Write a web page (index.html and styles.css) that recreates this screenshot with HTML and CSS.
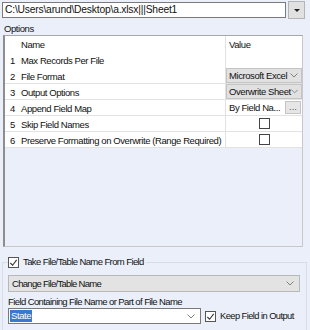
FILE: index.html
```html
<!DOCTYPE html>
<html>
<head>
    <meta charset="UTF-8">
    <meta name="viewport" content="width=device-width, initial-scale=1.0">
    <title>Output Options</title>
    <link rel="stylesheet" href="styles.css">
</head>
<body>
    <div class="pathRow">
        <div class="pathBox">C:\Users\arund\Desktop\a.xlsx|||Sheet1</div>
        <div class="pathBtn"><span class="tri"></span></div>
    </div>

    <div class="optLabel">Options</div>

    <div class="grid">
        <div class="row head">
            <div class="num"></div>
            <div class="name">Name</div>
            <div class="val">Value</div>
        </div>
        <div class="row first">
            <div class="num">1</div>
            <div class="name">Max Records Per File</div>
            <div class="val"></div>
        </div>
        <div class="row">
            <div class="num">2</div>
            <div class="name">File Format</div>
            <div class="val"><div class="combo">Microsoft Excel<svg width="8" height="5" viewBox="0 0 8 5"><path d="M0.5 0.5 L4 4 L7.5 0.5" fill="none" stroke="#808080"/></svg></div></div>
        </div>
        <div class="row">
            <div class="num">3</div>
            <div class="name">Output Options</div>
            <div class="val"><div class="combo">Overwrite Sheet<svg width="8" height="5" viewBox="0 0 8 5"><path d="M0.5 0.5 L4 4 L7.5 0.5" fill="none" stroke="#808080"/></svg></div></div>
        </div>
        <div class="row">
            <div class="num">4</div>
            <div class="name">Append Field Map</div>
            <div class="val"><div class="mapCell"><span>By Field Na...</span><span class="dots">...</span></div></div>
        </div>
        <div class="row">
            <div class="num">5</div>
            <div class="name">Skip Field Names</div>
            <div class="val center"><span class="box"></span></div>
        </div>
        <div class="row">
            <div class="num">6</div>
            <div class="name">Preserve Formatting on Overwrite (Range Required)</div>
            <div class="val center"><span class="box"></span></div>
        </div>
    </div>

    <fieldset class="group">
        <legend><span class="box checked"><svg width="10" height="10" viewBox="0 0 10 10"><path d="M1.5 5 L4 7.5 L8.5 1.5" fill="none" stroke="#333" stroke-width="1.2"/></svg></span>Take File/Table Name From Field</legend>
        <div class="wideCombo">Change File/Table Name<svg width="8" height="5" viewBox="0 0 8 5"><path d="M0.5 0.5 L4 4 L7.5 0.5" fill="none" stroke="#808080"/></svg></div>
        <div class="fieldLabel">Field Containing File Name or Part of File Name</div>
        <div class="fieldRow">
            <div class="fieldInput"><span class="sel">State</span><svg width="8" height="5" viewBox="0 0 8 5"><path d="M0.5 0.5 L4 4 L7.5 0.5" fill="none" stroke="#808080"/></svg></div>
            <span class="box checked"><svg width="10" height="10" viewBox="0 0 10 10"><path d="M1.5 5 L4 7.5 L8.5 1.5" fill="none" stroke="#333" stroke-width="1.2"/></svg></span>
            <span class="keep">Keep Field in Output</span>
        </div>
    </fieldset>
</body>
</html>
```

FILE: styles.css
```css
*{margin: 0; padding: 0; box-sizing: border-box;}
body{ background: #eaeff9; font-family: "Liberation Sans", Arial, sans-serif; font-size: 9.5px; letter-spacing: -0.42px; color: #111; width: 310px; height: 330px; overflow: hidden; }

.pathRow{ display: flex; align-items: flex-start; padding: 1px 0 0 2px; }
.pathBox{ width: 284px; height: 16px; margin-top: 1px; border: 1px solid #7a7a7a; background: #fff; padding-left: 2px; line-height: 14px; white-space: nowrap; overflow: hidden; font-size: 10.3px; letter-spacing: -0.2px; }
.pathBtn{ width: 17px; height: 18px; margin-left: 2px; background: #e1e1e1; border: 1px solid #b4b4b4; display: flex; align-items: center; justify-content: center; }
.tri{ width: 0; height: 0; border-left: 3px solid transparent; border-right: 3px solid transparent; border-top: 3px solid #222; }

.optLabel{ padding: 3px 0 0 4px; height: 16px; line-height: 14px; }

.grid{ margin: 0 7px 0 3px; height: 212px; border: 1px solid #c8c8c8; border-left: 2px solid #8e8e8e; border-top-color: #a8a8a8; }
.row{ display: flex; height: 16px; background: #fff; border-bottom: 1px solid #e2e2e2; }
.row.head, .row.first{ border-bottom: none; }
.num{ width: 15px; padding-left: 5px; line-height: 17px; }
.name{ flex: 1; padding-left: 1px; line-height: 17px; white-space: nowrap; overflow: hidden; }
.val{ width: 77px; border-left: 1px solid #e2e2e2; line-height: 16px; padding-left: 3px; white-space: nowrap; }
.row.head .val{ line-height: 17px; }
.val.center{ display: flex; align-items: center; justify-content: center; padding-left: 0; }

.combo{ margin-left: -3px; height: 15px; background: #e1e1e1; border: 1px solid #c4c4c4; padding-left: 2px; display: flex; align-items: center; justify-content: space-between; padding-right: 3px; }
.mapCell{ display: flex; justify-content: space-between; align-items: center; padding-right: 1px; height: 15px; }
.dots{ width: 16px; height: 13px; background: #e6e6e6; border: 1px solid #c4c4c4; line-height: 9px; text-align: center; color: #555; letter-spacing: 0; }

.box{ display: inline-flex; width: 11px; height: 11px; border: 1px solid #444; background: #fff; flex-shrink: 0; }
.box.checked{ border-color: #555; }

.group{ margin: 9px 3px 0 2px; border: 1px solid #d8dce4; border-bottom: none; height: 80px; padding: 7px 6px 0 5px; }
.group legend{ display: flex; align-items: center; gap: 4px; padding: 0 2px 0 0; margin-left: 0; line-height: 12px; font-size: 9.5px; letter-spacing: -0.6px; }
.wideCombo{ height: 17px; background: #e3e3e3; border: 1px solid #b8b8b8; display: flex; align-items: center; justify-content: space-between; padding: 0 5px 0 3px; letter-spacing: -0.7px; }
.fieldLabel{ margin-top: 4px; line-height: 12px; letter-spacing: -0.6px; }
.fieldRow{ display: flex; align-items: center; gap: 4px; white-space: nowrap; }
.fieldInput{ width: 193px; height: 16px; background: #fff; border: 1px solid #7a7a7a; display: flex; align-items: center; justify-content: space-between; padding: 0 5px 0 1px; }
.sel{ background: #3a78d4; color: #fff; line-height: 12px; padding: 0 1px; }
.keep{ font-size: 9.3px; letter-spacing: -0.55px; }
```
